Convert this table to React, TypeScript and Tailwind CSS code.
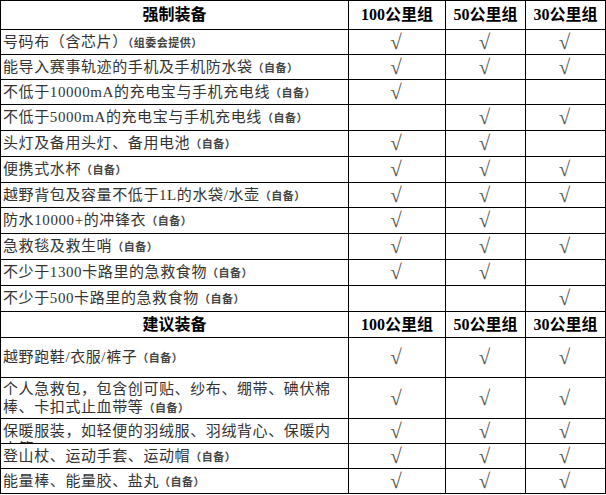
const required = [
  { name: "号码布（含芯片）", note: "（组委会提供）", checks: [true, true, true], h: "h-[25px]" },
  { name: "能导入赛事轨迹的手机及手机防水袋", note: "（自备）", checks: [true, true, true], h: "h-[25px]" },
  { name: "不低于10000mA的充电宝与手机充电线", note: "（自备）", checks: [true, false, false], h: "h-[25px]" },
  { name: "不低于5000mA的充电宝与手机充电线", note: "（自备）", checks: [false, true, true], h: "h-[26px]" },
  { name: "头灯及备用头灯、备用电池", note: "（自备）", checks: [true, true, false], h: "h-[26px]" },
  { name: "便携式水杯", note: "（自备）", checks: [true, true, true], h: "h-[26px]" },
  { name: "越野背包及容量不低于1L的水袋/水壶", note: "（自备）", checks: [true, true, true], h: "h-[25px]" },
  { name: "防水10000+的冲锋衣", note: "（自备）", checks: [true, true, false], h: "h-[26px]" },
  { name: "急救毯及救生哨", note: "（自备）", checks: [true, true, true], h: "h-[26px]" },
  { name: "不少于1300卡路里的急救食物", note: "（自备）", checks: [true, true, false], h: "h-[26px]" },
  { name: "不少于500卡路里的急救食物", note: "（自备）", checks: [false, false, true], h: "h-[26px]" },
];

const suggested = [
  { name: "越野跑鞋/衣服/裤子", note: "（自备）", checks: [true, true, true], h: "h-[40px]", clip: false },
  { name: "个人急救包，包含创可贴、纱布、绷带、碘伏棉棒、卡扣式止血带等", note: "（自备）", checks: [true, true, true], h: "h-[41px]", clip: false },
  { name: "保暖服装，如轻便的羽绒服、羽绒背心、保暖内衣等", note: "（自备）", checks: [true, true, true], h: "h-[25px]", clip: true },
  { name: "登山杖、运动手套、运动帽", note: "（自备）", checks: [true, true, true], h: "h-[25px]", clip: false },
  { name: "能量棒、能量胶、盐丸", note: "（自备）", checks: [true, true, true], h: "h-[25px]", clip: false },
];

const groups = ["100公里组", "50公里组", "30公里组"];

type Row = { name: string; note: string; checks: boolean[]; h: string; clip?: boolean };

function HeaderRow({ title, h }: { title: string; h: string }) {
  return (
    <>
      <div className={`${h} flex items-center justify-center border-r border-b border-black text-[16px] font-bold text-black`}>
        {title}
      </div>
      {groups.map((g) => (
        <div key={g} className={`${h} flex items-center justify-center border-r border-b border-black text-[16px] font-bold text-black`}>
          {g}
        </div>
      ))}
    </>
  );
}

function ItemRow({ row }: { row: Row }) {
  return (
    <>
      {row.clip ? (
        <div className={`${row.h} overflow-hidden border-r border-b border-black pl-[2px] pr-[12px] pt-[3px] text-[15px] leading-[18px] tracking-[0.6px] text-[#333]`}>
          {row.name}
          <span className="text-[11px] tracking-[0.5px] font-bold text-[#444]">{row.note}</span>
        </div>
      ) : (
        <div className={`${row.h} flex items-center border-r border-b border-black pl-[2px] text-[15px] leading-[18px] tracking-[0.6px] text-[#333]`}>
          <div>
            {row.name}
            <span className="text-[11px] tracking-[0.5px] font-bold text-[#444]">{row.note}</span>
          </div>
        </div>
      )}
      {row.checks.map((c, i) => (
        <div
          key={i}
          className={`${row.h} flex items-center justify-center border-r border-b border-black pr-[2px] text-[21px] leading-none text-[#555]`}
        >
          {c ? "√" : ""}
        </div>
      ))}
    </>
  );
}

export default function App() {
  return (
    <div className="w-[606px] h-[495px] bg-white" style={{ fontFamily: '"Liberation Serif", "Noto Sans CJK SC", serif' }}>
      <div className="grid grid-cols-[348px_97px_80px_80px] border-l border-t border-black">
        <HeaderRow title="强制装备" h="h-[29px]" />
        {required.map((r) => (
          <ItemRow key={r.name} row={r} />
        ))}
        <HeaderRow title="建议装备" h="h-[26px]" />
        {suggested.map((r) => (
          <ItemRow key={r.name} row={r} />
        ))}
      </div>
    </div>
  );
}
